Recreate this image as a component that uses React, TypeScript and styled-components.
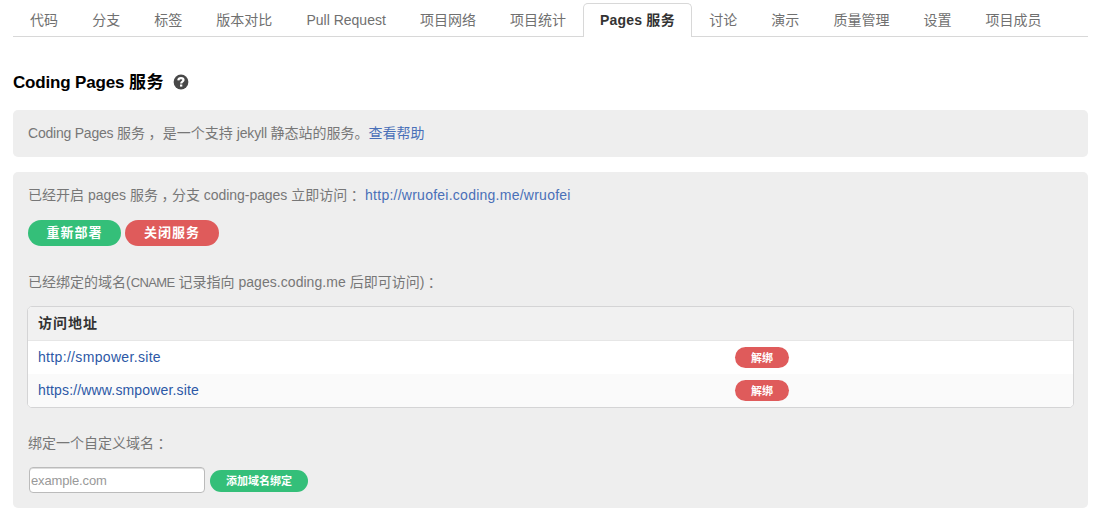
import React from "react";
import styled, { createGlobalStyle } from "styled-components";

const GlobalStyle = createGlobalStyle`
  * { box-sizing: border-box; }
  body {
    margin: 0;
    background: #fff;
    color: #777;
    font-family: "Liberation Sans", "Noto Sans CJK SC", sans-serif;
    font-size: 14px;
    line-height: 20px;
  }
`;

const Page = styled.main`
  padding: 3px 14px 0 13px;
`;

const Tabs = styled.nav`
  display: flex;
  height: 34px;
  border-bottom: 1px solid #d8d8d8;
`;

const Tab = styled.a<{ $active?: boolean }>`
  flex: none;
  height: 34px;
  padding: 6px 16.05px 0;
  border: 1px solid ${(p) => (p.$active ? "#d8d8d8" : "transparent")};
  border-bottom: 0;
  border-radius: 5px 5px 0 0;
  background: ${(p) => (p.$active ? "#fff" : "transparent")};
  color: ${(p) => (p.$active ? "#333" : "#707070")};
  font-weight: ${(p) => (p.$active ? 700 : 400)};
  white-space: nowrap;
`;

const Track = styled.span<{ $by: number }>`
  letter-spacing: ${(p) => p.$by}px;
`;

/* Half-width punctuation centred in a full-width cell. */
const Mark = styled.span`
  display: inline-block;
  width: 14px;
  padding-left: 3.5px;
  font-family: "Noto Sans CJK SC", sans-serif;
  font-feature-settings: "halt" 1;
  line-height: 16px;
`;

const Acronym = styled.span`
  font-size: 13px;
  letter-spacing: -0.6px;
`;

const Title = styled.h1`
  display: flex;
  align-items: center;
  gap: 9px;
  height: 24px;
  margin: 34px 0 15px;
  color: #000;
  font-size: 17px;
  line-height: 24px;
  white-space: nowrap;

  svg { margin-top: -2px; }
`;

const Panel = styled.section<{ $height: number }>`
  height: ${(p) => p.$height}px;
  margin-bottom: 15px;
  padding: 13px 14px 0 15px;
  border-radius: 5px;
  background: #eee;
`;

const Line = styled.p<{ $gap?: number }>`
  height: 20px;
  margin: 0 0 ${(p) => p.$gap || 0}px;
  white-space: nowrap;
`;

const Link = styled.a`
  color: #4a70b8;
`;

const DomainLink = styled.a`
  padding-bottom: 2px;
  color: #2c58a6;
`;

const Actions = styled.div`
  display: flex;
  gap: 4px;
  margin-bottom: 26px;
`;

const Button = styled.button<{ $tone: "green" | "red"; $w: number }>`
  display: block;
  width: ${(p) => p.$w}px;
  height: 26px;
  padding: 0 0 3px;
  border: 0;
  border-radius: 13px;
  background: ${(p) => (p.$tone === "green" ? "#34bf79" : "#df5b5b")};
  color: #fff;
  font: 700 13px/20px "Noto Sans CJK SC", sans-serif;
  letter-spacing: 1px;
  white-space: nowrap;
`;

const SmallButton = styled(Button)<{ $h?: number }>`
  height: ${(p) => p.$h || 21}px;
  padding-bottom: 2px;
  font-size: 11px;
  line-height: 18px;
  letter-spacing: 0;
`;

const Table = styled.div`
  width: 1047px;
  height: 102px;
  margin: 0 0 25px -1px;
  border: 1px solid #d4d4d5;
  border-radius: 5px;
  background: #fff;
  overflow: hidden;
`;

const HeadRow = styled.div`
  height: 34px;
  padding: 6px 10px 0;
  border-bottom: 1px solid #e6e6e6;
  background: #f1f1f1;
  color: #333;
  font-weight: 700;
`;

const Row = styled.div<{ $alt?: boolean }>`
  display: grid;
  grid-template-columns: 697px 1fr;
  align-items: center;
  height: 33px;
  padding-left: 10px;
  background: ${(p) => (p.$alt ? "#fafafa" : "#fff")};
`;

const Form = styled.div`
  display: flex;
  align-items: flex-start;
  gap: 5px;
  padding-left: 1px;
`;

const DomainInput = styled.input`
  width: 176px;
  height: 26px;
  padding: 1px 1px 0;
  border: 1px solid #bbb;
  border-radius: 4px;
  background: #fff;
  box-shadow: inset 0 1px 0 #ddd;
  font: 13px "Liberation Sans", sans-serif;
  letter-spacing: -0.15px;
  &::placeholder { color: #999; opacity: 1; }
`;

const SubmitSlot = styled.div`
  display: flex;
  padding-top: 3px;
`;

const HelpIcon = () => (
  <svg width="16" height="16" viewBox="0 0 16 16">
    <circle cx="8" cy="8" r="7.4" fill="#484848" />
    <path d="M5.3 6.3C5.5 4.8 6.5 4.1 8 4.1c1.5 0 2.5.8 2.5 2 0 1.7-2.3 1.5-2.3 3.3" fill="none" stroke="#fff" strokeWidth="2.2" />
    <rect x="7" y="10.5" width="2.3" height="2.1" fill="#fff" />
  </svg>
);

const before = ["代码", "分支", "标签", "版本对比", "Pull Request", "项目网络", "项目统计"];
const after = ["讨论", "演示", "质量管理", "设置", "项目成员"];
const domains = [
  { url: "http://smpower.site", track: 0.33 },
  { url: "https://www.smpower.site", track: 0.16 },
];

export default function App() {
  return (
    <>
      <GlobalStyle />
      <Page>
        <Tabs>
          {before.map((t) => <Tab key={t}>{t}</Tab>)}
          <Tab $active><Track $by={0.15}>Pages </Track><Track $by={0.5}>服务</Track></Tab>
          {after.map((t) => <Tab key={t}>{t}</Tab>)}
        </Tabs>
        <Title>
          <span><Track $by={-0.17}>Coding Pages </Track><Track $by={0.6}>服务</Track></span>
          <HelpIcon />
        </Title>
        <Panel $height={47}>
          <Line>
            <Track $by={-0.22}>Coding Pages </Track>服务<Mark>，</Mark> 是一个支持 <Track $by={-0.17}>jekyll </Track>静态站的服务。<Link>查看帮助</Link>
          </Line>
        </Panel>
        <Panel $height={336}>
          <Line $gap={15}>
            已经开启 pages 服务<Mark>，</Mark>分支 <Track $by={-0.05}>coding-pages</Track> 立即访问<Mark>：</Mark>{" "}
            <Link><Track $by={0.25}>http://wruofei.coding.me/wruofei</Track></Link>
          </Line>
          <Actions>
            <Button $tone="green" $w={93}>重新部署</Button>
            <Button $tone="red" $w={94}>关闭服务</Button>
          </Actions>
          <Line $gap={14}>
            已经绑定的域名(<Acronym>CNAME</Acronym> 记录指向 <Track $by={0.05}>pages.coding.me</Track> 后即可访问)<Mark>：</Mark>
          </Line>
          <Table>
            <HeadRow><Track $by={1}>访问地址</Track></HeadRow>
            {domains.map((d, i) => (
              <Row key={d.url} $alt={i === 1}>
                <DomainLink><Track $by={d.track}>{d.url}</Track></DomainLink>
                <SmallButton $tone="red" $w={54}>解绑</SmallButton>
              </Row>
            ))}
          </Table>
          <Line $gap={14}>绑定一个自定义域名<Mark>：</Mark></Line>
          <Form>
            <DomainInput placeholder="example.com" />
            <SubmitSlot><SmallButton $tone="green" $w={98} $h={22}>添加域名绑定</SmallButton></SubmitSlot>
          </Form>
        </Panel>
      </Page>
    </>
  );
}
